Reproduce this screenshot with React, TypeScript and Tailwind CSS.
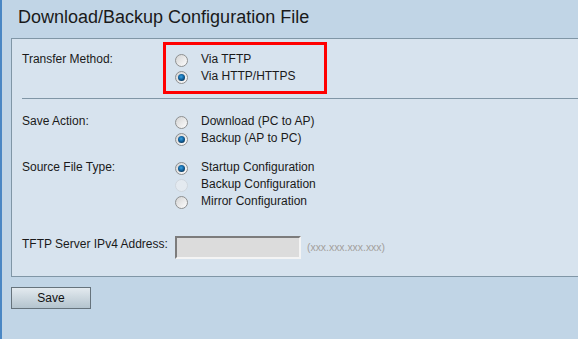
type RadioState = 'off' | 'on' | 'disabled'

function Radio({ state }: { state: RadioState }) {
  if (state === 'disabled') {
    return (
      <svg width="13" height="13" viewBox="0 0 13 13" className="shrink-0">
        <circle cx="6.5" cy="6.5" r="6" fill="#e4eaf0" stroke="#cfd6dd" />
      </svg>
    )
  }
  return (
    <svg width="13" height="13" viewBox="0 0 13 13" className="shrink-0">
      <defs>
        <linearGradient id="rfill" x1="0" y1="0" x2="1" y2="1">
          <stop offset="0" stopColor="#d2d2d2" />
          <stop offset="1" stopColor="#ffffff" />
        </linearGradient>
        <radialGradient id="rdot" cx="0.45" cy="0.4" r="0.6">
          <stop offset="0" stopColor="#3aa2e0" />
          <stop offset="0.55" stopColor="#1469a8" />
          <stop offset="1" stopColor="#0b3a5e" />
        </radialGradient>
      </defs>
      <circle cx="6.5" cy="6.5" r="6" fill="url(#rfill)" stroke="#8d8f90" />
      {state === 'on' && <circle cx="6.5" cy="6.5" r="3.5" fill="url(#rdot)" />}
    </svg>
  )
}

function Choice({ state, label }: { state: RadioState; label: string }) {
  return (
    <div className="flex h-[17px] items-center">
      <div className="flex w-[26px] pt-[1px]">
        <Radio state={state} />
      </div>
      <span className="leading-[17px]">{label}</span>
    </div>
  )
}

function Group({ label, options }: { label: string; options: { state: RadioState; label: string }[] }) {
  return (
    <div className="flex">
      <div className="w-[153px] leading-[17px]">{label}</div>
      <div className="flex flex-col">
        {options.map((o) => (
          <Choice key={o.label} state={o.state} label={o.label} />
        ))}
      </div>
    </div>
  )
}

export default function App() {
  return (
    <div className="h-[339px] w-[578px] overflow-hidden border-l-2 border-[#4a87c4] bg-[#c1d5e6] font-['Liberation_Sans',Arial,sans-serif] text-[12px] text-[#1a1a1a]">
      <h1 className="pl-[16px] pt-[8px] text-[18px] leading-[18px] text-[#1a1a1a]">
        Download/Backup Configuration File
      </h1>

      <div className="relative ml-[9px] mt-[12px] border-y border-l border-[#8096a6] bg-[#d7e3ee] pb-[17px] pt-[12px]">
        <div className="pl-[10px]">
          <Group
            label="Transfer Method:"
            options={[
              { state: 'off', label: 'Via TFTP' },
              { state: 'on', label: 'Via HTTP/HTTPS' },
            ]}
          />
        </div>

        <div className="absolute left-[151px] top-[3px] h-[52px] w-[164px] border-[3px] border-[#ff0000]" />

        <div className="ml-[10px] mt-[13px] border-t border-[#8096a6]" />

        <div className="flex flex-col gap-[12px] pl-[10px] pt-[14px]">
          <Group
            label="Save Action:"
            options={[
              { state: 'off', label: 'Download (PC to AP)' },
              { state: 'on', label: 'Backup (AP to PC)' },
            ]}
          />
          <Group
            label="Source File Type:"
            options={[
              { state: 'on', label: 'Startup Configuration' },
              { state: 'disabled', label: 'Backup Configuration' },
              { state: 'off', label: 'Mirror Configuration' },
            ]}
          />
        </div>

        <div className="mt-[26px] flex items-start pl-[10px]">
          <div className="w-[153px] leading-[17px]">TFTP Server IPv4 Address:</div>
          <div className="h-[23px] w-[126px] border-2 border-b-[#f4f4f4] border-l-[#7c7c7c] border-r-[#f4f4f4] border-t-[#7c7c7c] bg-[#dcdcdc]" />
          <span className="ml-[6px] mt-[5px] text-[10.4px] leading-[14px] text-[#a3a09c]">(xxx.xxx.xxx.xxx)</span>
        </div>
      </div>

      <button className="ml-[9px] mt-[10px] h-[22px] w-[80px] border border-[#66737c] bg-gradient-to-b from-[#e3eaef] to-[#b4c4ce] text-[12px] leading-[18px] text-[#111]">
        Save
      </button>
    </div>
  )
}
